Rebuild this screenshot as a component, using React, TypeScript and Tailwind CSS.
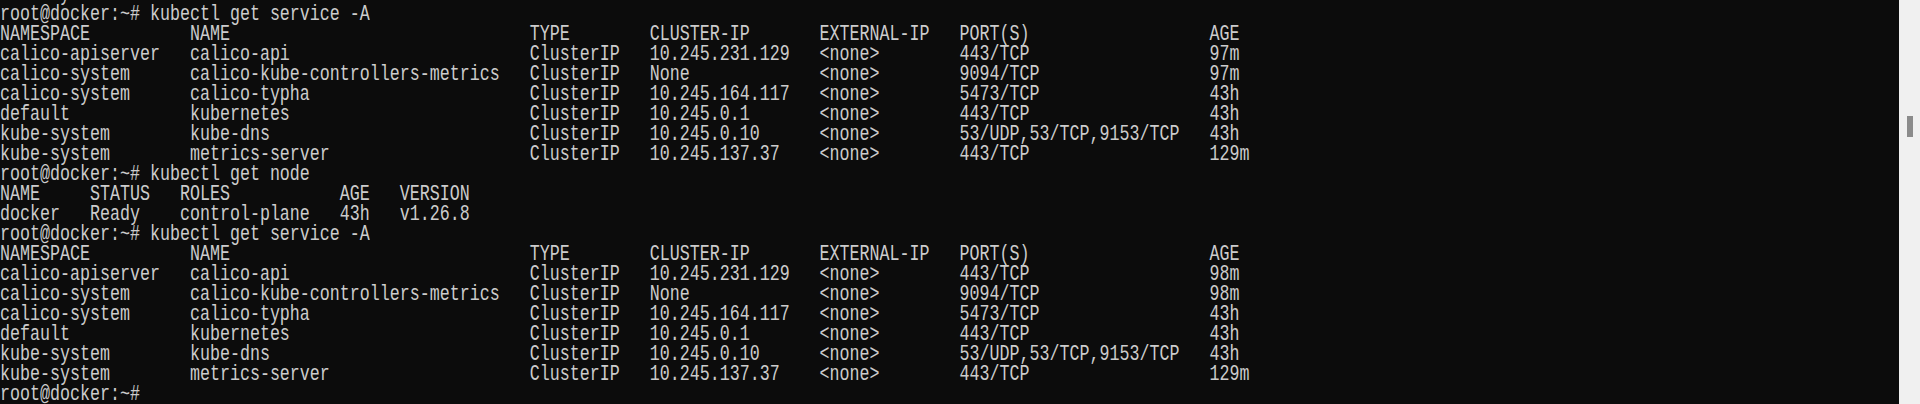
const svcWidths = [19, 34, 12, 17, 14, 25];
const nodeWidths = [9, 9, 16, 6];

function pad(cols: string[], widths: number[]) {
  return cols.map((c, i) => (i < widths.length ? c.padEnd(widths[i], " ") : c)).join("").trimEnd();
}

const services = (ages: string[]) => [
  ["NAMESPACE", "NAME", "TYPE", "CLUSTER-IP", "EXTERNAL-IP", "PORT(S)", "AGE"],
  ["calico-apiserver", "calico-api", "ClusterIP", "10.245.231.129", "<none>", "443/TCP", ages[0]],
  ["calico-system", "calico-kube-controllers-metrics", "ClusterIP", "None", "<none>", "9094/TCP", ages[1]],
  ["calico-system", "calico-typha", "ClusterIP", "10.245.164.117", "<none>", "5473/TCP", ages[2]],
  ["default", "kubernetes", "ClusterIP", "10.245.0.1", "<none>", "443/TCP", ages[3]],
  ["kube-system", "kube-dns", "ClusterIP", "10.245.0.10", "<none>", "53/UDP,53/TCP,9153/TCP", ages[4]],
  ["kube-system", "metrics-server", "ClusterIP", "10.245.137.37", "<none>", "443/TCP", ages[5]],
].map((r) => pad(r, svcWidths));

const prompt = "root@docker:~# ";

const lines: string[] = [
  "kube-system       metrics-server",
  prompt + "kubectl get service -A",
  ...services(["97m", "97m", "43h", "43h", "43h", "129m"]),
  prompt + "kubectl get node",
  pad(["NAME", "STATUS", "ROLES", "AGE", "VERSION"], nodeWidths),
  pad(["docker", "Ready", "control-plane", "43h", "v1.26.8"], nodeWidths),
  prompt + "kubectl get service -A",
  ...services(["98m", "98m", "43h", "43h", "43h", "129m"]),
  prompt.trimEnd(),
];

export default function App() {
  return (
    <div className="flex h-[404px] w-full overflow-hidden bg-[#0c0c0c]">
      <div className="flex-1 overflow-hidden">
        <div
          className="-mt-[15px] text-[16.6667px] leading-[20px] text-[#cccccc] whitespace-pre"
          style={{ fontFamily: '"Liberation Mono", "DejaVu Sans Mono", monospace' }}
        >
          {lines.map((line, i) => (
            <div key={i} className="h-[20px] scale-y-[1.3]">
              {line || " "}
            </div>
          ))}
        </div>
      </div>
      <div className="flex w-[21px] flex-col bg-[#f0f0f0] pl-[8px] pt-[116px]">
        <div className="h-[21px] w-[6px] bg-[#8b8b8b]" />
      </div>
    </div>
  );
}
